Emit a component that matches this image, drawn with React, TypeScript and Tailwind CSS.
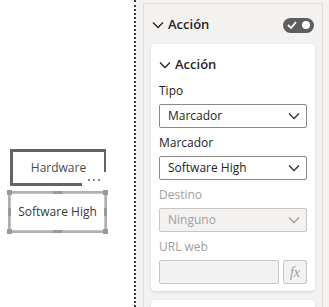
import React from "react";

const font = { fontFamily: '"Segoe UI", "Open Sans", "Noto Sans", sans-serif' };

function Chevron({ className = "", color = "#252423" }: { className?: string; color?: string }) {
  return (
    <svg width="12" height="8" viewBox="0 0 12 8" className={className}>
      <polyline points="1,1.5 6,6.5 11,1.5" fill="none" stroke={color} strokeWidth="1.3" />
    </svg>
  );
}

function Select({ value, disabled = false }: { value: string; disabled?: boolean }) {
  return (
    <div
      className={`flex h-[24px] shrink-0 items-center justify-between rounded-[2px] border pl-[8px] pr-[6px] text-[12px] ${
        disabled ? "border-[#c8c6c4] bg-[#f3f2f1] text-[#a19f9d]" : "border-[#8a8886] bg-white text-[#252423]"
      }`}
    >
      <span>{value}</span>
      <Chevron color={disabled ? "#a19f9d" : "#323130"} />
    </div>
  );
}

export default function App() {
  return (
    <div className="flex h-[307px] w-[329px] overflow-hidden bg-white" style={font}>
      {/* canvas */}
      <div className="relative h-full w-[134px] shrink-0 bg-white">
        <div className="absolute left-[10px] top-[149px] h-[37px] w-[96px] border-[3px] border-r-[2px] border-[#646464] bg-white">
          <div className="flex h-full items-center justify-center text-[12px] text-[#4a4a4a]">Hardware</div>
          <div className="absolute bottom-[-3px] right-[-2px] flex h-[14px] w-[24px] items-center justify-center gap-[3px] bg-white pt-[2px]">
            <div className="h-[2px] w-[2px] bg-[#8a8886]" />
            <div className="h-[2px] w-[2px] bg-[#8a8886]" />
            <div className="h-[2px] w-[2px] bg-[#8a8886]" />
          </div>
        </div>
        <div className="absolute left-[8px] top-[191px] h-[42px] w-[99px] border-[2px] border-[#b0b0b0] bg-white">
          <div className="flex h-full items-center justify-center border border-[#c8c6c4] text-[12px] text-[#3b3a39]">
            Software High
          </div>
          {/* handles */}
          <div className="absolute left-[-3px] top-[-3px] h-[5px] w-[5px] bg-[#999999]" />
          <div className="absolute right-[-3px] top-[-3px] h-[5px] w-[5px] bg-[#999999]" />
          <div className="absolute bottom-[-3px] left-[-3px] h-[5px] w-[5px] bg-[#999999]" />
          <div className="absolute bottom-[-3px] right-[-3px] h-[5px] w-[5px] bg-[#999999]" />
          <div className="absolute left-[43px] top-[-2px] h-[3px] w-[9px] bg-[#999999]" />
          <div className="absolute bottom-[-2px] left-[43px] h-[3px] w-[9px] bg-[#999999]" />
          <div className="absolute left-[-2px] top-[15px] h-[8px] w-[3px] bg-[#999999]" />
          <div className="absolute right-[-2px] top-[15px] h-[8px] w-[3px] bg-[#999999]" />
        </div>
      </div>
      {/* dotted divider */}
      <div className="h-full w-[2px] shrink-0 border-l-[2px] border-dotted border-[#3b3a39]" />
      {/* format pane */}
      <div className="flex h-full flex-1 bg-[#f3f2f1] pl-[7px] pr-[6px] pt-[3px]">
        <div className="flex flex-1 flex-col border-x border-t border-[#e1dfdd] px-[7px]">
          <div className="flex h-[40px] shrink-0 items-center justify-between pt-[2px]">
            <div className="flex items-center gap-[4px] pl-[1px] text-[13px] font-semibold text-[#252423]">
              <Chevron />
              <span>Acción</span>
            </div>
            <div className="mr-[1px] flex h-[15px] w-[31px] items-center justify-between rounded-full bg-[#605e5c] px-[4px]">
              <svg width="10" height="8" viewBox="0 0 10 8">
                <polyline points="1,4 4,7 9,1" fill="none" stroke="white" strokeWidth="1.8" />
              </svg>
              <div className="h-[8px] w-[8px] rounded-full bg-white" />
            </div>
          </div>
          <div className="shrink-0 rounded-[4px] bg-white px-[8px] pb-[7px] shadow-[0_1px_3px_rgba(0,0,0,0.13)]">
            <div className="flex h-[38px] items-center gap-[4px] pt-[4px] text-[13px] font-semibold text-[#252423]">
              <Chevron />
              <span>Acción</span>
            </div>
            <div className="flex flex-col text-[12px]">
              <div className="mb-[4px] text-[#252423]">Tipo</div>
              <Select value="Marcador" />
              <div className="mb-[4px] mt-[6px] text-[#252423]">Marcador</div>
              <Select value="Software High" />
              <div className="mb-[4px] mt-[6px] text-[#a19f9d]">Destino</div>
              <Select value="Ninguno" disabled />
              <div className="mb-[4px] mt-[6px] text-[#a19f9d]">URL web</div>
              <div className="flex gap-[4px]">
                <div className="h-[24px] flex-1 rounded-[2px] border border-[#c8c6c4] bg-[#f3f2f1]" />
                <div
                  className="flex h-[24px] w-[24px] items-center justify-center rounded-[2px] border border-[#c8c6c4] bg-[#f3f2f1] text-[14px] italic text-[#a19f9d]"
                  style={{ fontFamily: '"Liberation Serif", serif' }}
                >
                  fx
                </div>
              </div>
            </div>
          </div>
          <div className="mt-[9px] h-[20px] shrink-0 rounded-t-[4px] bg-white shadow-[0_1px_3px_rgba(0,0,0,0.13)]" />
        </div>
      </div>
    </div>
  );
}
